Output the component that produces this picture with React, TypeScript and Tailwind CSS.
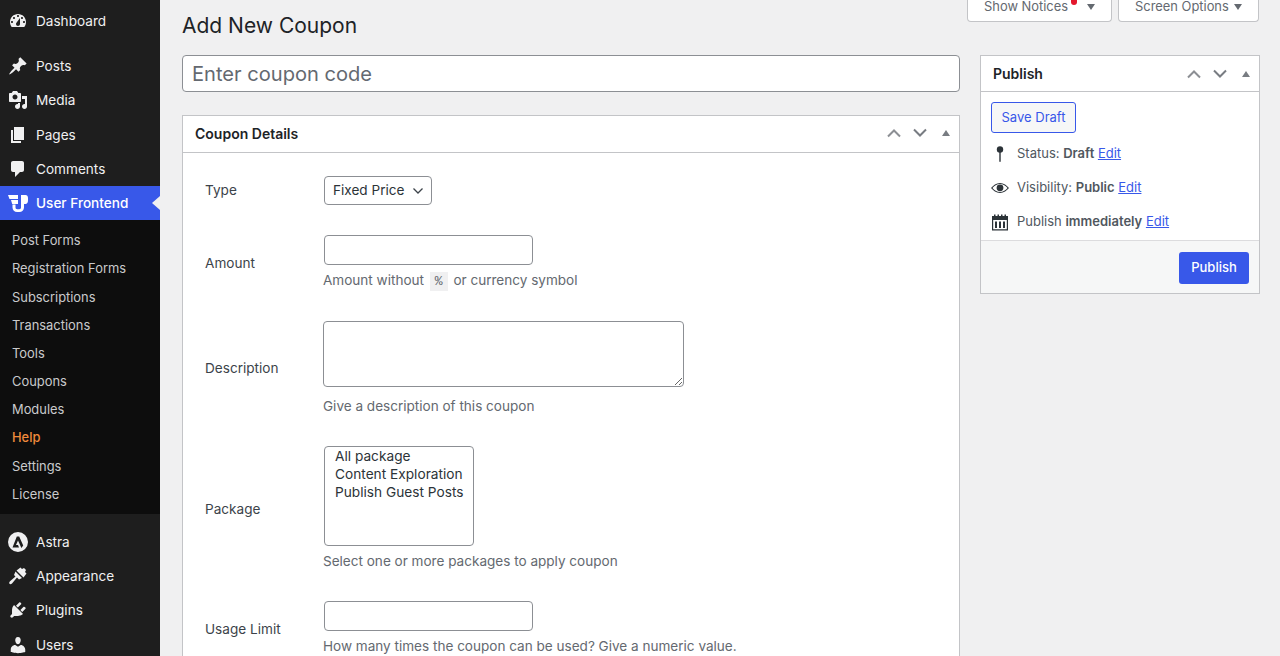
import type { JSX, ReactNode } from 'react';

const ICONS: Record<string, string> = {
  dashboard:
    'M3.76 16h12.48c1.1-1.37 1.76-3.11 1.76-5 0-4.42-3.58-8-8-8s-8 3.58-8 8c0 1.89.66 3.63 1.76 5zM10 4c.55 0 1 .45 1 1s-.45 1-1 1-1-.45-1-1 .45-1 1-1zM6 6c.55 0 1 .45 1 1s-.45 1-1 1-1-.45-1-1 .45-1 1-1zm8 0c.55 0 1 .45 1 1s-.45 1-1 1-1-.45-1-1 .45-1 1-1zm-5.37 5.55L12 7v6c0 1.1-.9 2-2 2s-2-.9-2-2c0-.57.24-1.08.63-1.45zM4 10c.55 0 1 .45 1 1s-.45 1-1 1-1-.45-1-1 .45-1 1-1zm12 0c.55 0 1 .45 1 1s-.45 1-1 1-1-.45-1-1 .45-1 1-1z',
  posts:
    'M10.44 3.02l1.82-1.82 6.36 6.35-1.83 1.82c-1.05-.68-2.48-.57-3.41.36l-.75.75c-.92.93-1.04 2.35-.35 3.41l-1.83 1.82-2.41-2.41-2.8 2.79c-.42.42-3.38 2.71-3.8 2.29s1.86-3.39 2.28-3.81l2.79-2.79L4.1 9.36l1.83-1.82c1.05.69 2.48.57 3.4-.36l.75-.75c.93-.92 1.05-2.35.36-3.41z',
  media:
    'M13 11V4c0-.55-.45-1-1-1h-1.67L9 1H5L3.67 3H2c-.55 0-1 .45-1 1v7c0 .55.45 1 1 1h10c.55 0 1-.45 1-1zM7 4.5c1.38 0 2.5 1.12 2.5 2.5S8.38 9.5 7 9.5 4.5 8.38 4.5 7 5.62 4.5 7 4.5zM14 6h5v10.5c0 1.38-1.12 2.5-2.5 2.5S14 17.88 14 16.5s1.12-2.5 2.5-2.5c.17 0 .34.02.5.05V9h-3V6zm-4 8.05V13h2v3.5c0 1.38-1.12 2.5-2.5 2.5S7 17.88 7 16.5 8.12 14 9.5 14c.17 0 .34.02.5.05z',
  pages: 'M6 15V2h10v13H6zm-1 1h8v2H3V5h2v11z',
  comments:
    'M5 2h9c1.1 0 2 .9 2 2v7c0 1.1-.9 2-2 2h-2l-5 5v-5H5c-1.1 0-2-.9-2-2V4c0-1.1.9-2 2-2z',
  appearance:
    'M8.5 4.500L12.500 1.500 14 3l2-1 2 2-1 2 1.500 1.500-3 4zM7.500 5.500L14 12l-3 1.500-2-2-5 6c-.8.8-2.200.8-2.500.3-.5-.5-.3-1.700.5-2.500l5.500-4.800L6 9z',
  plugins:
    'M13.11 4.36L9.87 7.6 8 5.73l3.24-3.24c.35-.34 1.05-.2 1.56.32.52.51.66 1.21.31 1.55zm-8 1.77l.91-1.12 9.01 9.01-1.19.84c-.71.71-2.63 1.16-3.82 1.16H6.14L4.9 17.26c-.59.59-1.54.59-2.12 0-.59-.58-.59-1.53 0-2.12l1.24-1.24v-3.88c0-1.13.4-3.19 1.09-3.89zm7.26 3.97l3.24-3.24c.34-.35 1.04-.21 1.55.31.52.51.66 1.21.31 1.55l-3.24 3.25z',
  users:
    'M10 9.25c-2.27 0-2.73-3.44-2.73-3.44C7 4.02 7.82 2 9.97 2c2.16 0 2.98 2.02 2.71 3.81 0 0-.41 3.44-2.68 3.44zm0 2.57L12.72 10c2.39 0 4.52 2.33 4.52 4.53v2.49s-3.65 1.13-7.24 1.13c-3.65 0-7.24-1.13-7.24-1.13v-2.49c0-2.25 1.94-4.48 4.47-4.48z',
  astra:
    'M10 0a10 10 0 1 0 0 20 10 10 0 0 0 0-20zM8.800 4.500h2.400l4 9-1.800 2.500-3.400-7.500-2 4.500H10l1 2.500H4.500z',
};

const SUBMENU = [
  { label: 'Post Forms', height: 'h-[28px]' },
  { label: 'Registration Forms', height: 'h-[29px] pb-[1px]' },
  { label: 'Subscriptions', height: 'h-[28px]' },
  { label: 'Transactions', height: 'h-[28px]' },
  { label: 'Tools', height: 'h-[28px]' },
  { label: 'Coupons', height: 'h-[28px]' },
  { label: 'Modules', height: 'h-[28px]' },
  { label: 'Help', height: 'h-[29px] pb-[1px]' },
  { label: 'Settings', height: 'h-[28px]' },
  { label: 'License', height: 'h-[28px]' },
];

function MenuIcon({ name }: { readonly name: string }): JSX.Element {
  return (
    <svg viewBox="0 0 20 20" className="h-5 w-5 shrink-0" fill="#f0f0f1" fillRule="evenodd">
      <path d={ICONS[name]} />
    </svg>
  );
}

function MenuItem({ icon, label, height }: { readonly icon: string; readonly label: string; readonly height: string }): JSX.Element {
  return (
    <div className={`flex shrink-0 items-center gap-[8px] pl-[8px] ${height} text-[13.6px] text-[#f0f0f1]`}>
      <MenuIcon name={icon} />
      <span>{label}</span>
    </div>
  );
}

function Sidebar(): JSX.Element {
  return (
    <aside className="flex h-[656px] w-40 shrink-0 flex-col overflow-hidden bg-[#1e1e1e]">
      <div className="h-[4px] shrink-0" />
      <MenuItem icon="dashboard" label="Dashboard" height="h-[34px]" />
      <div className="h-[11px] shrink-0" />
      <MenuItem icon="posts" label="Posts" height="h-[34px]" />
      <MenuItem icon="media" label="Media" height="h-[34px]" />
      <MenuItem icon="pages" label="Pages" height="h-[35px] pt-[1px]" />
      <MenuItem icon="comments" label="Comments" height="h-[34px]" />
      <div className="relative flex h-[34px] shrink-0 items-center gap-[8px] bg-[#3858e9] pl-[8px] text-[13.6px] font-medium text-white">
        <svg viewBox="0 0 20 17" className="h-[17px] w-5 shrink-0" fill="#ffffff">
          <path d="M0 0h10v4H1.500zM3 5h7v4H4.200zM4.500 9.500h3v3c0 1 .8 1.700 1.700 1.700h2.100c1 0 1.700-.7 1.700-1.700V0h4.500C19 0 20 1.200 20 3v2.500C20 7.500 19 9 17.500 9h-1.500v3.500c0 2.600-2 4.500-4.700 4.500H9.200c-2.700 0-4.700-1.900-4.700-4.500z" />
        </svg>
        <span>User Frontend</span>
        <span className="absolute right-0 top-[10px] border-y-[7px] border-r-[8px] border-y-transparent border-r-[#f0f0f1]" />
      </div>
      <div className="flex shrink-0 flex-col bg-[#0d0d0d] pt-[7px] pb-[5px] text-[12.9px]">
        {SUBMENU.map((item) => (
          <div
            key={item.label}
            className={`flex shrink-0 items-center pl-3 ${item.height} ${item.label === 'Help' ? 'font-medium text-[#f08a3c]' : 'text-[#c9cacc]'}`}
          >
            {item.label}
          </div>
        ))}
      </div>
      <div className="h-[11px] shrink-0" />
      <MenuItem icon="astra" label="Astra" height="h-[34px]" />
      <MenuItem icon="appearance" label="Appearance" height="h-[34px]" />
      <MenuItem icon="plugins" label="Plugins" height="h-[34px]" />
      <MenuItem icon="users" label="Users" height="h-[35px] pt-[1px]" />
    </aside>
  );
}

function TopTab({ label, width, dot }: { readonly label: string; readonly width: string; readonly dot?: boolean }): JSX.Element {
  return (
    <div className={`relative flex h-[22px] ${width} items-center justify-between rounded-b border border-t-0 border-[#c3c4c7] bg-white pl-4 pr-[16px] pb-[8px] pt-0 text-[12.9px] text-[#646970]`}>
      <span>{label}</span>
      {dot && <span className="absolute left-[103px] top-0 h-[5px] w-[6px] rounded-b-full bg-[#e3172d]" />}
      <span className="border-x-[4px] border-t-[6px] border-x-transparent border-t-[#646970]" />
    </div>
  );
}

function BoxControls(): JSX.Element {
  return (
    <div className="flex items-center">
      <svg viewBox="0 0 16 10" className="h-[10px] w-4" fill="none" stroke="#8c8f94" strokeWidth="2">
        <path d="M2 8.500l6-6 6 6" />
      </svg>
      <svg viewBox="0 0 16 10" className="ml-[10px] h-[10px] w-4" fill="none" stroke="#787c82" strokeWidth="2">
        <path d="M2 1.500l6 6 6-6" />
      </svg>
      <span className="ml-[14px] border-x-[4px] border-b-[6px] border-x-transparent border-b-[#787c82]" />
    </div>
  );
}

function Row({ label, labelClass, className, children, help }: {
  readonly label: string;
  readonly labelClass?: string;
  readonly className: string;
  readonly children: ReactNode;
  readonly help?: ReactNode;
}): JSX.Element {
  return (
    <div className={`flex items-center ${className}`}>
      <div className={`w-[141px] shrink-0 pl-[22px] text-[13.6px] text-[#3c434a] ${labelClass ?? ''}`}>{label}</div>
      <div className="flex flex-col items-start">
        {children}
        {help}
      </div>
    </div>
  );
}

function Help({ children, className }: { readonly children: ReactNode; readonly className: string }): JSX.Element {
  return <p className={`-ml-[1px] whitespace-nowrap text-[13.55px] leading-[18px] text-[#646970] ${className}`}>{children}</p>;
}

function CouponDetails(): JSX.Element {
  return (
    <section className="mt-[23px] border border-[#c3c4c7] bg-white pb-8">
      <div className="flex h-[37px] items-center justify-between border-b border-[#c3c4c7] pl-3 pb-[2px] pr-[9px]">
        <h2 className="text-[14px] font-semibold text-[#1d2327]">Coupon Details</h2>
        <BoxControls />
      </div>
      <div className="flex flex-col pt-[23px]">
        <Row label="Type" className="">
          <div className="relative">
            <select className="h-[29px] w-[108px] appearance-none rounded border border-[#8c8f94] bg-white pl-2 text-[13.6px] text-[#2c3338] outline-none">
              <option>Fixed Price</option>
            </select>
            <svg viewBox="0 0 12 8" className="pointer-events-none absolute right-[8px] top-[11px] h-2 w-3" fill="none" stroke="#3c434a" strokeWidth="1.3">
              <path d="M1.500 1.500L6 6l4.500-4.500" />
            </svg>
          </div>
        </Row>
        <Row
          label="Amount"
          className="mt-[30px]"
          help={
            <Help className="mt-[6px]">
              Amount without <code className="mx-[2px] bg-[#f0f0f1] px-[5px] py-[2px] font-['Liberation_Mono',monospace] text-[13px]">%</code> or currency symbol
            </Help>
          }
        >
          <input className="h-[30px] w-[209px] rounded border border-[#8c8f94] bg-white outline-none" />
        </Row>
        <Row
          label="Description"
          className="mt-[30px]"
          help={<Help className="mt-[10px]">Give a description of this coupon</Help>}
        >
          <textarea className="-ml-[1px] block h-[66px] w-[361px] rounded border border-[#8c8f94] bg-white outline-none" />
        </Row>
        <Row
          label="Package"
          labelClass="pt-[2px]"
          className="mt-[31px]"
          help={<Help className="mt-[6px]">Select one or more packages to apply coupon</Help>}
        >
          <select
            multiple
            defaultValue={[]}
            className="h-[100px] w-[150px] overflow-hidden rounded border border-[#8c8f94] bg-white px-[10px] pt-[1px] text-[13.7px] text-[#2c3338] outline-none"
          >
            <option className="min-h-[18px]">All package</option>
            <option className="min-h-[18px]">Content Exploration</option>
            <option className="min-h-[18px]">Publish Guest Posts</option>
          </select>
        </Row>
        <Row
          label="Usage Limit"
          labelClass="pt-[2px]"
          className="mt-[31px]"
          help={<Help className="mt-[6px]">How many times the coupon can be used? Give a numeric value.</Help>}
        >
          <input className="h-[30px] w-[209px] rounded border border-[#8c8f94] bg-white outline-none" />
        </Row>
      </div>
    </section>
  );
}

function PublishBox(): JSX.Element {
  return (
    <aside className="w-[280px] shrink-0 border border-[#c3c4c7] bg-white">
      <div className="flex h-[36px] items-center justify-between border-b border-[#c3c4c7] pl-3 pr-[9px]">
        <h2 className="text-[14px] font-semibold text-[#1d2327]">Publish</h2>
        <BoxControls />
      </div>
      <div className="px-[10px] pt-[10px] pb-[1px]">
        <button type="button" className="h-[31px] w-[85px] rounded-[3px] border border-[#3858e9] bg-[#f6f7f7] text-[13px] text-[#3858e9]">
          Save Draft
        </button>
        <div className="mt-[4px] flex h-[34px] items-center text-[13px] text-[#50575e]">
          <svg viewBox="0 0 18 18" className="h-[18px] w-[18px]" fill="#2c3338">
            <circle cx="9" cy="4.500" r="3.200" />
            <rect x="8.300" y="6" width="1.400" height="11" rx=".7" />
          </svg>
          <span className="ml-[8px]">
            Status: <b className="font-semibold">Draft</b> <a className="text-[#3858e9] underline">Edit</a>
          </span>
        </div>
        <div className="flex h-[34px] items-center text-[13px] text-[#50575e]">
          <svg viewBox="0 0 18 18" className="h-[18px] w-[18px]" fill="#2c3338">
            <path fillRule="evenodd" d="M9 4c3.800 0 6.800 2.600 9 5-2.200 2.400-5.200 5-9 5s-6.800-2.600-9-5C2.200 6.600 5.200 4 9 4zM1.500 9c1.500 1.900 4.500 4 7.500 4s6-2.100 7.500-4C15 7.100 12 5 9 5S3 7.100 1.500 9z" />
            <circle cx="9" cy="8.800" r="3.400" />
          </svg>
          <span className="ml-[8px]">
            Visibility: <b className="font-semibold">Public</b> <a className="text-[#3858e9] underline">Edit</a>
          </span>
        </div>
        <div className="flex h-[34px] items-center text-[13px] text-[#50575e]">
          <svg viewBox="0 0 18 18" className="h-[18px] w-[18px]" fill="#2c3338">
            <path fillRule="evenodd" d="M1 3h2V1.500h1.500V3h2V1.500H8V3h2V1.500h1.500V3h2V1.500H15V3h2v14.500H1zm1.200 4v9.300h13.600V7zM4 8.500h2v6.500H4zm4 0h2v6.500H8zm4 0h2v6.500h-2z" />
          </svg>
          <span className="ml-[8px]">
            Publish <b className="font-semibold">immediately</b> <a className="text-[#3858e9] underline">Edit</a>
          </span>
        </div>
      </div>
      <div className="flex h-[53px] items-center justify-end border-t border-[#dcdcde] bg-[#f6f7f7] pt-[2px] pr-[10px]">
        <button type="button" className="h-[32px] w-[70px] rounded-[3px] bg-[#3858e9] text-[13px] font-medium text-white">
          Publish
        </button>
      </div>
    </aside>
  );
}

export default function App(): JSX.Element {
  return (
    <div className="flex h-[656px] w-[1280px] overflow-hidden bg-[#f0f0f1] font-['Inter','Liberation_Sans',sans-serif]">
      <Sidebar />
      <main className="flex min-w-0 flex-1 flex-col pl-[22px] pr-5">
        <div className="flex h-[55px] shrink-0 justify-between">
          <h1 className="mt-[11px] text-[21px] leading-[30px] font-normal text-[#1d2327]">Add New Coupon</h1>
          <div className="flex gap-[6px] pr-[1px]">
            <TopTab label="Show Notices" width="w-[145px]" dot />
            <TopTab label="Screen Options" width="w-[141px]" />
          </div>
        </div>
        <div className="flex items-start gap-5">
          <div className="w-[778px] shrink-0">
            <input
              placeholder="Enter coupon code"
              className="h-[37px] w-full rounded border border-[#8c8f94] bg-white px-[9px] pt-[1px] text-[20.1px] text-[#2c3338] outline-none placeholder:text-[#646970]"
            />
            <CouponDetails />
          </div>
          <PublishBox />
        </div>
      </main>
    </div>
  );
}
